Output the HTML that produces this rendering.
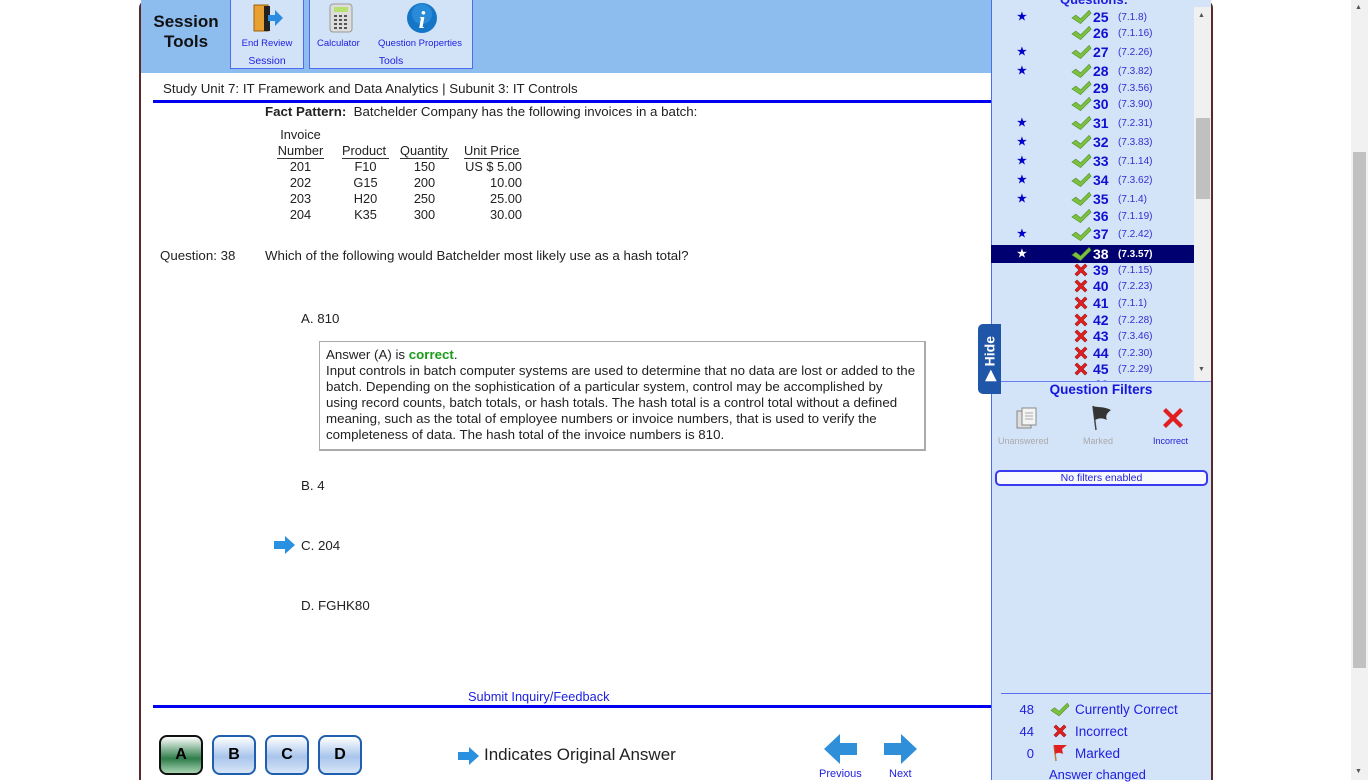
<!DOCTYPE html>
<html><head><meta charset="utf-8">
<style>
*{margin:0;padding:0;box-sizing:border-box}
body{width:1368px;height:780px;overflow:hidden;background:#fff;font-family:"Liberation Sans",Arial,sans-serif;font-size:12px;color:#222;position:relative}
.a{position:absolute}
.t{font-size:13.3px}
.q{position:absolute;left:0;width:203px;height:17px;font-size:14px;color:#1010d0;font-weight:bold}
.q .st{position:absolute;left:26px;top:1px;font-size:11px;color:#0000cc}
.q svg{position:absolute;left:80px;top:0}
.q .n{position:absolute;left:102px;top:0}
.q .c{position:absolute;left:127px;top:3px;font-size:10px;font-weight:normal;color:#3030d0}
.q.sel{background:#000070;color:#fff}
.q.sel .st,.q.sel .c{color:#fff;font-weight:bold}
.btn{position:absolute;top:735px;width:44px;height:40px;border:2px solid #1f5fae;border-radius:8px;background:linear-gradient(#fff,#a9c5ec 55%,#d8e5f7);font:bold 16px "Liberation Sans",sans-serif;color:#000;text-align:center;line-height:36px}
</style></head><body>
<div class="a" style="left:139px;top:0;width:1074px;height:780px;border-left:2px solid #5a2a2a;border-right:2px solid #5a2a2a;border-radius:8px 8px 0 0"></div>
<div class="a" style="left:141px;top:0;width:850px;height:73px;background:#8dbcee"></div>
<div class="a" style="left:150px;top:12px;width:72px;text-align:center;font:bold 17px 'Liberation Sans',sans-serif;color:#111;line-height:20px">Session<br>Tools</div>
<div class="a" style="left:230px;top:0;width:74px;height:69px;background:#d2e3f8;border:1px solid #4d6cf0;border-top:none"></div>
<div class="a" style="left:309px;top:0;width:164px;height:69px;background:#d2e3f8;border:1px solid #4d6cf0;border-top:none"></div>
<svg class="a" style="left:252px;top:3px" width="32" height="30"><rect x="2" y="2" width="14" height="26" fill="#e8a030" stroke="#a06010"/><rect x="12" y="3" width="6" height="25" fill="#222"/><path d="M16 12h7v-5l8 8-8 8v-5h-7z" fill="#2a8be0"/></svg>
<svg class="a" style="left:329px;top:3px" width="24" height="30"><rect x="1" y="1" width="22" height="28" rx="3" fill="#ddd" stroke="#999"/><rect x="5" y="4" width="14" height="5" fill="#b8e070"/><g fill="#555"><rect x="5" y="12" width="3" height="2"/><rect x="10" y="12" width="3" height="2"/><rect x="15" y="12" width="3" height="2"/><rect x="5" y="16" width="3" height="2"/><rect x="10" y="16" width="3" height="2"/><rect x="15" y="16" width="3" height="2"/><rect x="5" y="20" width="3" height="2"/><rect x="10" y="20" width="3" height="2"/><rect x="15" y="20" width="3" height="2"/><rect x="5" y="24" width="3" height="2"/><rect x="10" y="24" width="3" height="2"/><rect x="15" y="24" width="3" height="2"/></g></svg>
<svg class="a" style="left:406px;top:2px" width="32" height="32"><circle cx="16" cy="16" r="15" fill="#1576c8"/><circle cx="16" cy="12" r="10" fill="#3ea0e8" opacity=".5"/><text x="16" y="26" text-anchor="middle" font-family="Liberation Serif" font-style="italic" font-weight="bold" font-size="24" fill="#fff">i</text></svg>
<div class="a" style="left:230px;top:38px;width:74px;text-align:center;font-size:9.5px;color:#2020e0">End Review</div>
<div class="a" style="left:230px;top:55px;width:74px;text-align:center;font-size:10.5px;color:#2020e0">Session</div>
<div class="a" style="left:317px;top:38px;font-size:9.5px;color:#2020e0">Calculator</div>
<div class="a" style="left:378px;top:38px;font-size:9.5px;color:#2020e0">Question Properties</div>
<div class="a" style="left:309px;top:55px;width:164px;text-align:center;font-size:10.5px;color:#2020e0">Tools</div>
<div class="a" style="left:163px;top:81px;font-size:13.3px;color:#222">Study Unit 7: IT Framework and Data Analytics | Subunit 3: IT Controls</div>
<div class="a" style="left:153px;top:100px;width:838px;height:3px;background:#0000ee"></div>
<div class="a t" style="left:265px;top:104px"><b>Fact Pattern:</b>&nbsp; Batchelder Company has the following invoices in a batch:</div>
<div class="a" style="left:276px;top:127px;width:49px;text-align:center;font-size:12.8px;line-height:16px">Invoice<br>Number</div>
<div class="a" style="left:342px;top:143px;font-size:12.8px">Product</div>
<div class="a" style="left:400px;top:143px;font-size:12.8px">Quantity</div>
<div class="a" style="left:464px;top:143px;font-size:12.8px">Unit Price</div>
<div class="a" style="left:277px;top:158px;width:47px;height:1px;background:#333"></div>
<div class="a" style="left:342px;top:158px;width:47px;height:1px;background:#333"></div>
<div class="a" style="left:400px;top:158px;width:49px;height:1px;background:#333"></div>
<div class="a" style="left:464px;top:158px;width:57px;height:1px;background:#333"></div>
<div class="a" style="left:276px;top:159px;width:49px;text-align:center;font-size:12.8px;line-height:16px">201<br>202<br>203<br>204</div>
<div class="a" style="left:342px;top:159px;width:47px;text-align:center;font-size:12.8px;line-height:16px">F10<br>G15<br>H20<br>K35</div>
<div class="a" style="left:400px;top:159px;width:49px;text-align:center;font-size:12.8px;line-height:16px">150<br>200<br>250<br>300</div>
<div class="a" style="left:440px;top:159px;width:82px;text-align:right;font-size:12.8px;line-height:16px">US $ 5.00<br>10.00<br>25.00<br>30.00</div>
<div class="a t" style="left:160px;top:248px">Question: 38</div>
<div class="a t" style="left:265px;top:248px">Which of the following would Batchelder most likely use as a hash total?</div>
<div class="a t" style="left:301px;top:311px">A. 810</div>
<div class="a" style="left:319px;top:341px;width:607px;height:110px;border:1px solid #aaa;border-right:2px solid #aaa;border-bottom:2px solid #aaa;padding:5px 6px;font-size:13.3px;line-height:16px">Answer (A) is <b style="color:#1a9a1a">correct</b>.<br>Input controls in batch computer systems are used to determine that no data are lost or added to the batch. Depending on the sophistication of a particular system, control may be accomplished by using record counts, batch totals, or hash totals. The hash total is a control total without a defined meaning, such as the total of employee numbers or invoice numbers, that is used to verify the completeness of data. The hash total of the invoice numbers is 810.</div>
<div class="a t" style="left:301px;top:478px">B. 4</div>
<svg class="a" style="left:273px;top:536px" width="23" height="18"><path d="M1 5h11V0l10 9-10 9v-5H1z" fill="#2a90e0"/></svg>
<div class="a t" style="left:301px;top:538px">C. 204</div>
<div class="a t" style="left:301px;top:598px">D. FGHK80</div>
<div class="a" style="left:468px;top:689px;font-size:12.8px;color:#2020e0">Submit Inquiry/Feedback</div>
<div class="a" style="left:153px;top:705px;width:838px;height:3px;background:#0000ee"></div>
<div class="btn" style="left:159px;background:linear-gradient(#fff,#2e7d4a 60%,#a8d4b4);border-color:#111">A</div>
<div class="btn" style="left:212px">B</div>
<div class="btn" style="left:265px">C</div>
<div class="btn" style="left:318px">D</div>
<svg class="a" style="left:457px;top:747px" width="23" height="18"><path d="M1 5h11V0l10 9-10 9v-5H1z" fill="#2a90e0"/></svg>
<div class="a" style="left:484px;top:745px;font-size:17px;color:#222">Indicates Original Answer</div>
<svg class="a" style="left:824px;top:734px" width="34" height="30"><path d="M0 15L16 0v9h17v12H16v9z" fill="#2f8fd8"/></svg>
<svg class="a" style="left:884px;top:734px" width="34" height="30"><path d="M33 15L17 0v9H0v12h17v9z" fill="#2f8fd8"/></svg>
<div class="a" style="left:819px;top:768px;font-size:11px;color:#2020e0">Previous</div>
<div class="a" style="left:889px;top:768px;font-size:11px;color:#2020e0">Next</div>
<div class="a" style="left:991px;top:0;width:220px;height:780px;background:#d3e3f8;border-left:1px solid #4d6cf0"></div>
<div class="a" style="left:1060px;top:-8px;font-size:13px;color:#2020e0;font-weight:bold">Questions:</div>
<div class="a" style="left:1194px;top:7px;width:17px;height:374px;background:#f0f0f0"></div>
<div class="a" style="left:1196px;top:118px;width:14px;height:81px;background:#c0c0c0"></div>
<div class="a" style="left:1198px;top:12px;font-size:7px;color:#555">▲</div>
<div class="a" style="left:1198px;top:366px;font-size:7px;color:#555">▼</div>
<svg width="0" height="0" style="position:absolute"><defs><symbol id="ck" viewBox="0 0 22 16"><path d="M1 9l4-3 5 4L19 1l2 3-11 11z" fill="#7cc040" stroke="#4a8a20" stroke-width=".6"/></symbol><symbol id="x" viewBox="0 0 16 16"><path d="M2 4l2-2 4 4 4-4 2 2-4 4 4 4-2 2-4-4-4 4-2-2 4-4z" fill="#e02020" stroke="#a01010" stroke-width=".6"/></symbol></defs></svg>
<div class="a" style="left:991px;top:0;width:203px;height:381px;overflow:hidden">
<div class="q" style="top:9px"><span class="st">★</span><svg width="21" height="16"><use href="#ck"/></svg><span class="n">25</span><span class="c">(7.1.8)</span></div>
<div class="q" style="top:25px"><svg width="21" height="16"><use href="#ck"/></svg><span class="n">26</span><span class="c">(7.1.16)</span></div>
<div class="q" style="top:44px"><span class="st">★</span><svg width="21" height="16"><use href="#ck"/></svg><span class="n">27</span><span class="c">(7.2.26)</span></div>
<div class="q" style="top:63px"><span class="st">★</span><svg width="21" height="16"><use href="#ck"/></svg><span class="n">28</span><span class="c">(7.3.82)</span></div>
<div class="q" style="top:80px"><svg width="21" height="16"><use href="#ck"/></svg><span class="n">29</span><span class="c">(7.3.56)</span></div>
<div class="q" style="top:96px"><svg width="21" height="16"><use href="#ck"/></svg><span class="n">30</span><span class="c">(7.3.90)</span></div>
<div class="q" style="top:115px"><span class="st">★</span><svg width="21" height="16"><use href="#ck"/></svg><span class="n">31</span><span class="c">(7.2.31)</span></div>
<div class="q" style="top:134px"><span class="st">★</span><svg width="21" height="16"><use href="#ck"/></svg><span class="n">32</span><span class="c">(7.3.83)</span></div>
<div class="q" style="top:153px"><span class="st">★</span><svg width="21" height="16"><use href="#ck"/></svg><span class="n">33</span><span class="c">(7.1.14)</span></div>
<div class="q" style="top:172px"><span class="st">★</span><svg width="21" height="16"><use href="#ck"/></svg><span class="n">34</span><span class="c">(7.3.62)</span></div>
<div class="q" style="top:191px"><span class="st">★</span><svg width="21" height="16"><use href="#ck"/></svg><span class="n">35</span><span class="c">(7.1.4)</span></div>
<div class="q" style="top:208px"><svg width="21" height="16"><use href="#ck"/></svg><span class="n">36</span><span class="c">(7.1.19)</span></div>
<div class="q" style="top:226px"><span class="st">★</span><svg width="21" height="16"><use href="#ck"/></svg><span class="n">37</span><span class="c">(7.2.42)</span></div>
<div class="q sel" style="top:245px;height:18px"><span class="st" style="top:2px">★</span><svg width="21" height="16" style="top:1px"><use href="#ck"/></svg><span class="n" style="top:1px">38</span><span class="c" style="top:4px">(7.3.57)</span></div>
<div class="q" style="top:262px"><svg width="16" height="16" style="left:82px"><use href="#x"/></svg><span class="n">39</span><span class="c">(7.1.15)</span></div>
<div class="q" style="top:278px"><svg width="16" height="16" style="left:82px"><use href="#x"/></svg><span class="n">40</span><span class="c">(7.2.23)</span></div>
<div class="q" style="top:295px"><svg width="16" height="16" style="left:82px"><use href="#x"/></svg><span class="n">41</span><span class="c">(7.1.1)</span></div>
<div class="q" style="top:312px"><svg width="16" height="16" style="left:82px"><use href="#x"/></svg><span class="n">42</span><span class="c">(7.2.28)</span></div>
<div class="q" style="top:328px"><svg width="16" height="16" style="left:82px"><use href="#x"/></svg><span class="n">43</span><span class="c">(7.3.46)</span></div>
<div class="q" style="top:345px"><svg width="16" height="16" style="left:82px"><use href="#x"/></svg><span class="n">44</span><span class="c">(7.2.30)</span></div>
<div class="q" style="top:361px"><svg width="16" height="16" style="left:82px"><use href="#x"/></svg><span class="n">45</span><span class="c">(7.2.29)</span></div>
<div class="q" style="top:377px"><span class="n">46</span></div>
</div>
<div class="a" style="left:991px;top:381px;width:220px;height:1px;background:#6a7ef0"></div>
<div class="a" style="left:978px;top:324px;width:23px;height:70px;background:#1f56a8;border-radius:5px 0 0 5px"></div>
<div class="a" style="left:966px;top:350px;width:48px;transform:rotate(-90deg);color:#fff;font:bold 14px 'Liberation Sans',sans-serif;text-align:center">▶ Hide</div>
<div class="a" style="left:991px;top:382px;width:220px;text-align:center;font:bold 13.5px 'Liberation Sans',sans-serif;color:#1515e0">Question Filters</div>
<svg class="a" style="left:1015px;top:406px" width="24" height="24"><rect x="2" y="5" width="14" height="17" fill="#ddd" stroke="#888"/><rect x="7" y="2" width="14" height="17" fill="#f4f4f4" stroke="#888"/><path d="M10 7h8M10 10h8M10 13h8" stroke="#aaa"/></svg>
<svg class="a" style="left:1090px;top:404px" width="24" height="28"><path d="M3 2l3 24" stroke="#444" stroke-width="1.5"/><path d="M3 2c6 2 10 0 18 4-4 3-6 6-4 10-6-3-10-1-12 0z" fill="#333"/></svg>
<svg class="a" style="left:1161px;top:406px" width="24" height="24"><path d="M2 5l3-3 7 7 7-7 3 3-7 7 7 7-3 3-7-7-7 7-3-3 7-7z" fill="#e02020"/></svg>
<div class="a" style="left:998px;top:436px;font-size:9px;color:#aaa">Unanswered</div>
<div class="a" style="left:1083px;top:436px;font-size:9px;color:#aaa">Marked</div>
<div class="a" style="left:1153px;top:436px;font-size:9px;color:#2020e0">Incorrect</div>
<div class="a" style="left:995px;top:470px;width:213px;height:16px;border:2px solid #3a3af0;border-radius:5px;background:#f8f8ff;text-align:center;font-size:10.5px;color:#2020e0;line-height:12px">No filters enabled</div>
<div class="a" style="left:1001px;top:693px;width:210px;height:1px;background:#5a6ef0"></div>
<div class="a" style="left:1012px;top:699px;width:22px;text-align:right;font-size:13px;color:#2020e0;line-height:22px">48<br>44<br>0</div>
<svg class="a" style="left:1050px;top:702px" width="20" height="15" viewBox="0 0 22 16"><path d="M1 9l4-3 5 4L19 1l2 3-11 11z" fill="#7cc040" stroke="#4a8a20" stroke-width=".6"/></svg>
<svg class="a" style="left:1052px;top:723px" width="16" height="16" viewBox="0 0 16 16"><path d="M2 4l2-2 4 4 4-4 2 2-4 4 4 4-2 2-4-4-4 4-2-2 4-4z" fill="#e02020" stroke="#a01010" stroke-width=".6"/></svg>
<svg class="a" style="left:1052px;top:744px" width="16" height="18"><path d="M4 17L2 1" stroke="#c08040" stroke-width="1.5"/><path d="M2 1h13l-5 4 1 5c-4-2-6-1-8 0z" fill="#e02020"/></svg>
<div class="a" style="left:1075px;top:699px;font-size:13.5px;color:#2020e0;line-height:22px">Currently Correct<br>Incorrect<br>Marked</div>
<div class="a" style="left:1049px;top:767px;font-size:13px;color:#2020e0">Answer changed</div>
<div class="a" style="left:1351px;top:0;width:17px;height:780px;background:#f1f1f1"></div>
<div class="a" style="left:1353px;top:152px;width:13px;height:516px;background:#c1c1c1"></div>
<div class="a" style="left:1355px;top:4px;font-size:7px;color:#555">▲</div>
<div class="a" style="left:1355px;top:768px;font-size:7px;color:#555">▼</div>
</body></html>
